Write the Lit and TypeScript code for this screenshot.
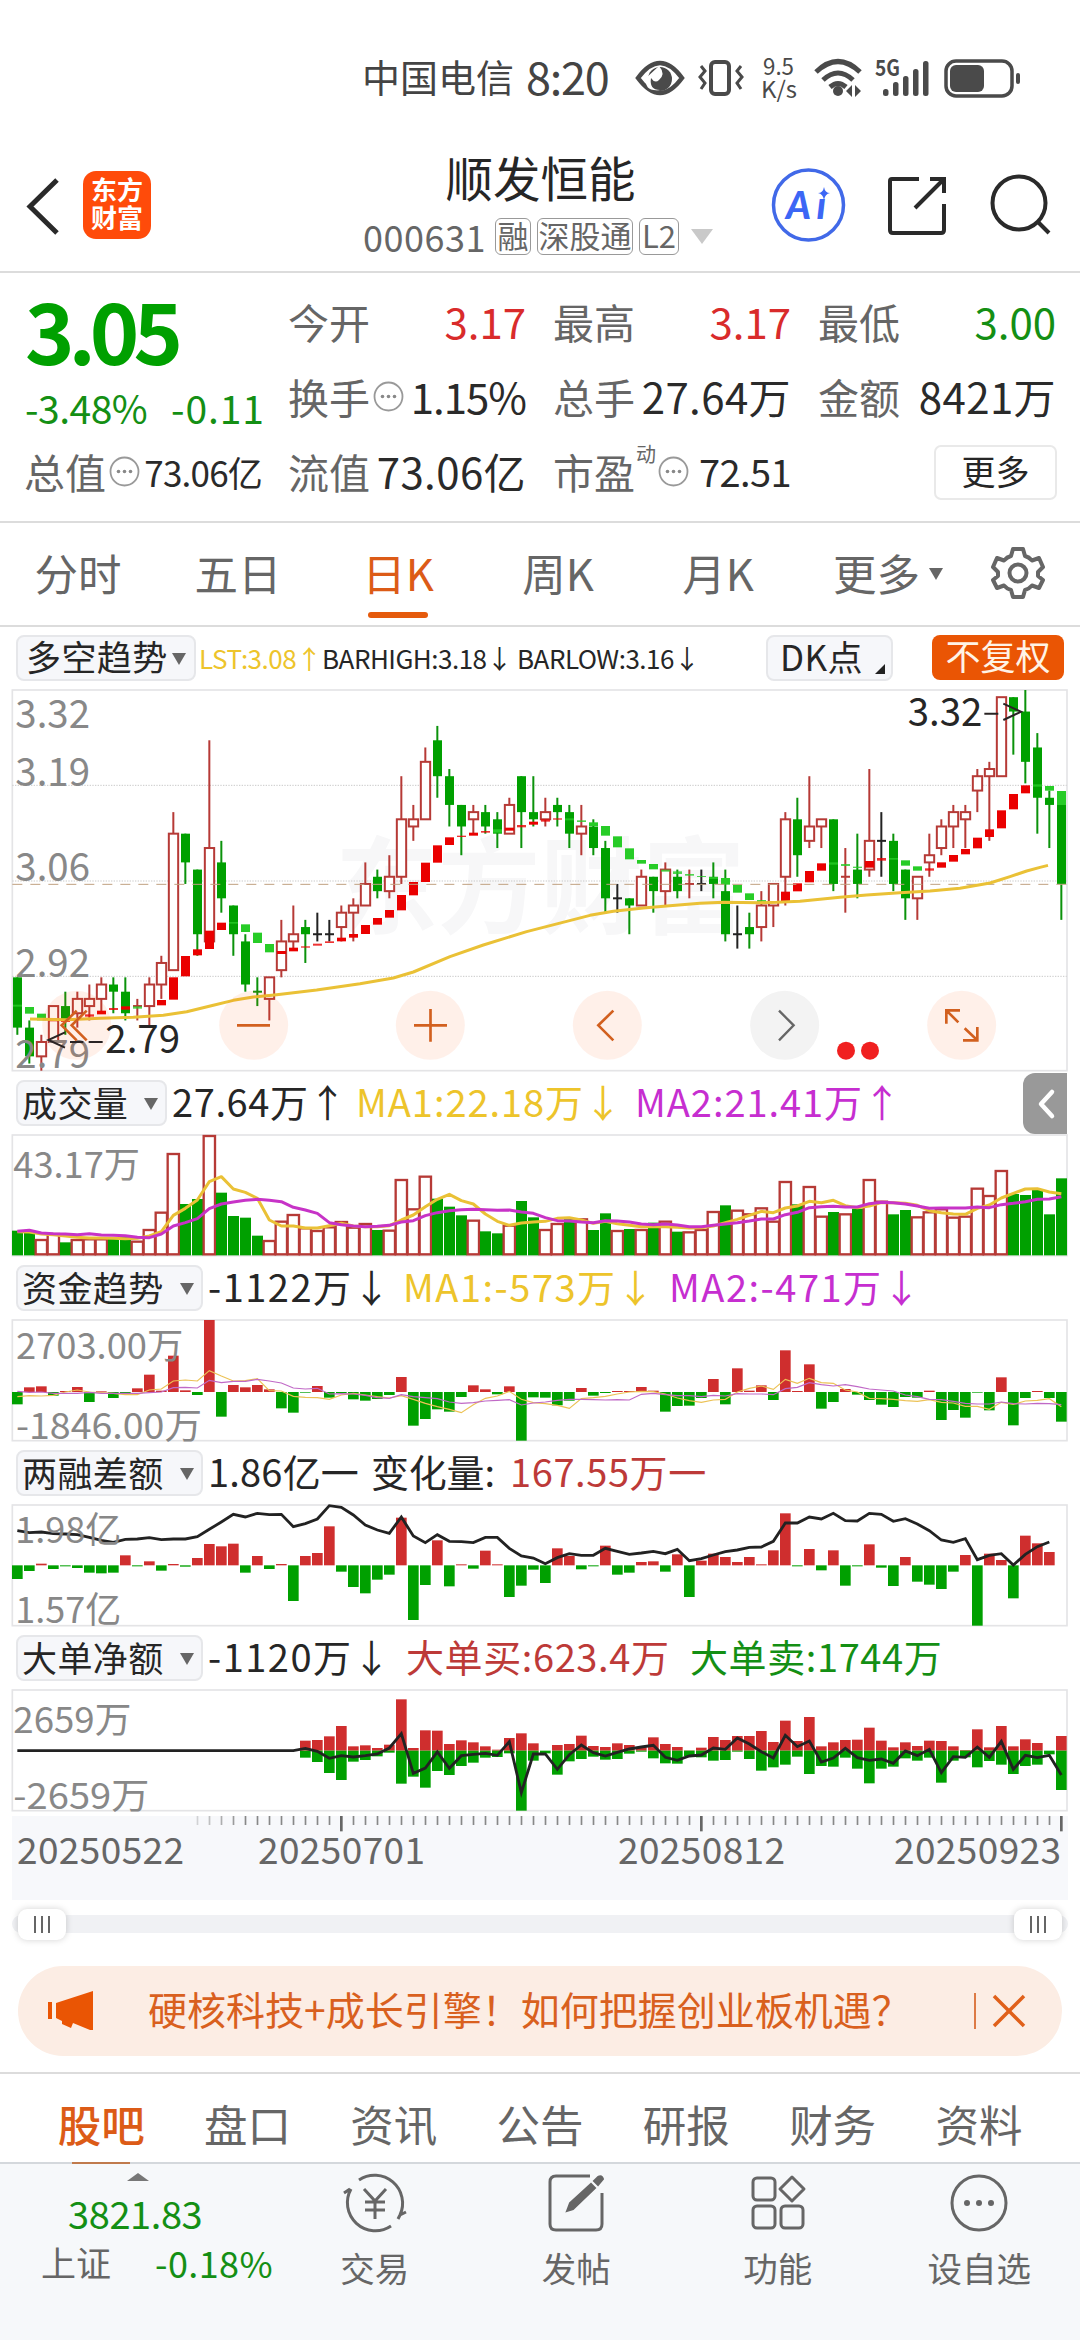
import { LitElement, html, svg, css } from "lit";
import { customElement, property } from "lit/decorators.js";

/* Chart geometry: three drawing units per CSS pixel. */
const X0 = 52;
const STEP = 36;
const cx = (i: number) => X0 + STEP * i;
const priceY = (cents: number) => 30 + (332 - cents) * 21.55;

/* Daily bars: kind, open/close top, open/close bottom, high, low (price in cents). */
const CANDLES =
  "g292,285,292,284 g285,281,286,280 r283,281,284,279 r288,283,288,283 g288,286,290,284 r289,287,290,285 r289,288,291,286 r291,289,292,287 g291,290,292,287 g290,287,292,286 r288,288,289,286 r291,288,292,285 r294,291,295,289 r312,293,315,293 g312,308,312,305 g307,298,307,295 r310,297,325,296 g308,303,311,301 g302,298,302,295 g297,291,298,290 g290,290,292,288 r292,289,292,286 r297,293,300,292 r298,297,302,296 g299,298,300,294 k298,298,301,297 k298,298,300,297 r301,299,302,297 r302,301,303,297 r305,302,308,302 g306,304,307,303 r306,304,309,303 r314,306,320,305 r314,313,316,311 r322,314,324,314 g325,320,327,317 g320,316,321,313 g316,313,316,309 r315,314,316,312 g315,313,316,312 g314,312,315,310 r316,312,317,312 g320,315,320,310 g315,314,320,313 r315,314,317,313 g316,315,317,313 g315,312,316,310 r313,312,316,309 g313,310,314,309 g310,303,311,301 k303,303,305,301 g303,302,303,298 r306,302,307,302 g306,304,306,301 r307,304,308,302 g306,304,307,303 r305,305,307,303 k305,305,307,304 g306,305,308,303 g304,298,307,297 k298,298,302,296 g299,298,301,296 r302,299,304,297 r305,302,305,299 r314,306,315,302 g314,309,317,306 r313,311,320,310 r314,313,314,310 g314,305,314,304 r306,306,310,301 g307,305,312,303 r311,307,321,306 k311,311,315,306 g311,305,312,304 g307,303,307,300 r306,303,306,300 r309,308,312,306 r313,310,314,309 r315,313,316,310 r315,314,316,310 r320,318,321,315 r321,320,322,311 r331,320,331,320 g331,329,331,323 g329,322,332,319 g324,317,326,312 g317,316,318,310 g317,305,317,300"
    .split(" ")
    .map((s) => ({ kind: s[0], v: s.slice(1).split(",").map(Number) }));

/* Trend blocks: kind+index, top, bottom. */
const TREND =
  "g0,974,980 g1,981,1001 g2,1001,1021 r3,1019,1024 r4,1020,1026 r6,1003,1010 r7,992,1003 r8,984,990 r9,979,989 g10,979,986 r12,960,976 r13,892,959 r14,828,889 r15,808,826 r16,752,807 r17,728,750 g18,726,731 g19,733,756 g20,758,789 g21,792,817 r22,813,822 r23,803,814 r24,799,803 r25,791,797 r26,784,789 r27,773,784 r28,762,773 r29,735,762 r30,714,734 r31,690,713 r32,645,691 r33,606,646 r34,548,606 r35,496,548 r36,472,495 r37,467,471 r38,458,467 r39,453,458 g40,448,458 r41,443,452 r42,435,442 r43,425,434 r44,418,425 r45,415,419 g46,415,421 g47,421,426 g48,427,438 g49,438,467 g50,469,502 g51,505,538 g52,540,551 g53,552,568 g54,569,575 g55,574,582 g56,582,587 g57,588,591 g58,591,597 g59,594,614 g60,615,638 g61,640,660 g62,660,666 r64,635,664 r65,610,634 r66,573,607 r67,550,572 g68,547,554 g69,552,558 g70,560,564 r71,543,563 r72,534,542 g73,534,539 g74,541,557 g75,559,572 r76,565,572 r77,547,563 r78,525,545 r79,507,523 r80,473,505 r81,448,471 r82,391,445 r83,342,388 r84,316,340 g85,313,320 g86,318,332 g87,333,375"
    .split(" ")
    .map((s) => ({ kind: s[0], v: s.slice(1).split(",").map(Number) }));

const TREND_LINE =
  "90,1017 200,1019 300,1015 400,1012 490,1006 560,995 640,976 700,961 760,951 830,944 950,930 1080,911 1180,894 1240,876 1350,830 1450,795 1580,755 1700,724 1770,706 1840,694 1930,684 2000,678 2100,670 2170,667 2280,668 2330,667 2400,664 2520,652 2600,645 2700,638 2790,633 2880,625 2970,609 3030,590 3080,573 3120,562 3144,556";

const nums = (s: string, off: number) => s.split(" ").map((n) => Number(n) - off);

const VOLUME =
  "g482 g487 r510 r492 g517 r510 r508 r508 g505 g495 r515 r480 r428 r252 g402 g387 r198 g368 g438 g443 g497 r513 r455 r435 r475 r483 r472 r456 r473 r462 g480 r482 r330 r418 r320 g386 g410 g436 r452 g484 g490 r467 g393 g442 r480 r462 g445 r448 g480 g430 r483 g477 r480 g458 r455 g485 r487 r480 r426 g406 r422 r433 r415 r455 r336 g403 r351 r440 g426 r433 g416 r330 r395 g433 g420 r442 r427 r418 r443 r440 r356 r378 r303 g372 g375 g360 g433 g325"
    .split(" ")
    .map((s) => ({ kind: s[0], y: Number(s.slice(1)) - 195 }));
const VOL_MA1 = nums("485 486 492 494 498 502 504 504 505 506 505 498 485 436 415 390 335 320 357 367 385 450 468 468 474 474 467 460 468 470 470 467 450 435 410 388 373 392 402 432 454 466 459 456 454 445 443 450 460 454 461 466 470 470 470 472 474 473 468 458 448 436 424 428 414 408 394 398 391 407 413 408 398 398 400 406 422 428 432 433 415 405 384 370 357 356 366 371", 195);
const VOL_MA2 = nums("484 481 489 491 492 494 491 495 496 497 502 503 492 468 458 446 416 402 396 391 388 391 395 412 420 430 458 464 468 470 469 466 456 452 437 428 422 419 418 419 421 420 426 430 443 452 453 456 458 452 453 456 462 464 462 465 470 470 466 462 458 453 447 447 434 427 413 410 409 411 411 401 397 398 402 408 415 414 414 414 411 413 404 400 395 388 387 380", 195);

const FUND = nums("1003 952 949 977 963 951 996 965 984 972 955 914 962 857 961 975 750 1040 945 952 945 958 1015 1028 966 948 983 969 988 992 987 975 921 1067 1047 1018 1025 981 946 958 973 949 1112 982 983 1006 992 954 977 969 963 963 951 962 1025 1008 1007 984 927 1003 895 962 946 990 841 963 883 1016 996 957 974 990 1004 1011 981 983 962 1050 1020 1043 968 1021 922 1066 984 963 984 1055", 750);
const FUND_MA1 = nums("980 977 978 976 966 960 966 968 970 974 974 960 957 933 930 933 902 918 933 932 926 962 963 979 982 983 988 975 970 975 980 984 977 988 1000 1010 1018 1028 1004 985 978 964 988 998 1001 1006 1015 986 983 979 972 966 964 965 972 984 992 997 990 988 966 955 948 958 928 940 925 938 940 960 966 985 986 988 992 994 989 997 999 1009 1009 1018 997 1003 993 991 986 1010", 750);
const FUND_MA2 = nums("964 967 966 970 970 970 967 970 970 970 970 968 966 953 952 954 931 938 934 934 928 933 939 954 957 955 972 971 972 976 983 985 974 980 983 986 996 1000 998 993 991 989 1005 999 996 991 988 988 989 990 989 990 973 970 974 977 977 980 976 978 971 972 972 974 956 952 938 944 948 944 950 957 960 963 975 980 988 989 994 1000 1002 1002 996 1001 1002 1000 1001 1004", 750);

const MARGIN = nums("417 393 371 387 379 384 398 400 398 346 379 364 392 372 380 354 312 319 311 398 348 387 372 483 348 339 259 395 441 460 419 404 233 540 435 301 439 373 386 332 373 471 437 389 429 325 348 388 379 317 404 398 366 364 395 343 471 362 341 351 366 351 373 331 220 379 327 391 331 437 379 313 383 438 351 425 434 447 395 345 557 341 360 475 287 310 336", 195);
const MARGIN_LINE = nums("272 278 276 281 282 284 292 301 307 298 297 293 299 297 297 290 268 246 223 231 220 224 223 260 251 237 197 202 225 255 270 280 231 288 308 284 304 305 308 292 292 325 348 354 371 353 341 346 346 325 334 343 339 334 341 328 362 356 345 335 330 322 321 304 249 249 231 237 220 242 243 220 223 244 236 252 272 300 307 296 359 346 341 375 343 320 306", 195);

const BLOCK_BUY = nums("902 900 889 858 919 916 924 914 778 924 871 872 912 901 907 919 929 894 880 910 932 915 912 887 918 921 910 915 922 892 912 921 931 923 891 900 888 888 873 906 842 903 831 919 907 900 899 863 902 922 907 918 902 903 919 930 868 922 858 919 898 909 932 888", 750);
const BLOCK_SELL = nums("953 966 999 1020 965 960 949 938 1031 1010 1043 993 1005 978 968 953 951 940 1112 962 940 1004 964 957 950 959 957 941 935 955 970 971 948 952 962 960 935 957 992 982 974 950 1002 978 980 953 986 1030 986 980 955 962 953 1028 962 952 982 963 974 1002 978 974 943 1050", 750);
const BLOCK_LINE = [
  ...Array(24).fill(182),
  ...nums("925 934 955 947 951 947 942 924 881 1000 984 936 985 947 943 940 946 905 1058 942 942 988 944 915 938 948 937 927 921 916 952 961 948 945 924 928 894 912 935 954 886 920 903 966 954 925 953 961 957 970 933 947 928 998 950 952 921 952 904 988 946 953 946 1005", 750),
];

const line = (v: number[], cls: string) =>
  svg`<polyline class=${cls} points=${v.map((y, i) => `${cx(i)},${y}`).join(" ")} />`;
const label = (t: string, x: number, y: number, w: number, cls = "lab") =>
  svg`<text class=${cls} x=${x} y=${y} textLength=${w} lengthAdjust="spacingAndGlyphs">${t}</text>`;
const signed = (v: number[], base: number) =>
  v.map((y, i) => {
    const up = y < base;
    const h = Math.max(2, Math.abs(y - base));
    return svg`<rect class=${up ? "up" : "down"} x=${cx(i) - 16} y=${up ? base - h : base} width="32" height=${h} />`;
  });

const chartCss = css`
  :host { display: block; }
  svg { display: block; }
  text { font-family: "Noto Sans CJK SC", sans-serif; }
  .frame { fill: none; stroke: #e4e4e6; stroke-width: 5; }
  .grid { stroke: #c9c9c9; stroke-width: 3; stroke-dasharray: 4 4; }
  .last { stroke: #c0a080; stroke-width: 3; stroke-dasharray: 30 24; }
  .lab { font-size: 108px; fill: #888; }
  .axis { font-size: 118px; fill: #888; }
  .note { font-size: 118px; fill: #262626; }
  .water { font-size: 315px; font-weight: 700; fill: #f7f7f8; }
  .hollow { fill: #fff; stroke: #b63a36; stroke-width: 6; }
  .vol { stroke-width: 7; }
  .up { fill: #cf2e2e; }
  .down { fill: #00a000; }
  .wr { fill: #b63a36; }
  .wg { fill: #0b920b; }
  .wk { fill: #222; }
  .tr { fill: #ea0000; }
  .tg { fill: #27cc27; }
  .thin { opacity: 0.8; }
  .yl { fill: none; stroke: #eac136; stroke-width: 9; stroke-linejoin: round; }
  .ml { fill: none; stroke: #c733c7; stroke-width: 9; stroke-linejoin: round; }
  .yt { fill: none; stroke: #ecc255; stroke-width: 3.5; }
  .mt { fill: none; stroke: #c069c6; stroke-width: 3.5; }
  .bl { fill: none; stroke: #222; stroke-width: 8.5; }
  .arrow { fill: none; stroke: #2a2424; stroke-width: 6; }
  .ctl { fill: #ff5000; fill-opacity: 0.085; }
  .ctl-off { fill: #f3f3f3; }
  .ico { fill: none; stroke: #d2601f; stroke-width: 8; }
  .ico-off { fill: none; stroke: #666; stroke-width: 7; }
  .dot { fill: #f02020; }
`;

@customElement("price-chart")
class PriceChart extends LitElement {
  static styles = chartCss;

  candle(kind: string, v: number[], i: number) {
    const [t, b, h, l] = v.map(priceY);
    const c = cx(i);
    const wick = svg`<rect class=${"w" + kind} x=${c - 3} y=${h} width="6" height=${l - h} />`;
    if (t === b) return svg`${wick}<rect class=${"w" + kind} x=${c - 13} y=${t - 3} width="27" height="6" />`;
    if (kind === "r")
      return svg`${wick}<rect class="hollow" x=${c - 13.5} y=${t} width="28" height=${b - t} />`;
    return svg`${wick}<rect class="down" x=${c - 13} y=${t} width="27" height=${b - t} />`;
  }

  render() {
    const pts = [77 * 3 - 1, 761, 1291, 1822, 2354, 2885];
    return html`<svg width="1062" height="384" viewBox="30 24 3186 1152">
      ${label("东方财富", 1006, 735, 1230, "water")}
      <rect class="frame" x="37" y="30" width="3164" height="1142" />
      <path class="grid" d="M37 316H3200M37 603H3200M37 889H3200" />
      ${label("3.32", 46, 144, 224, "axis")}${label("3.19", 46, 318, 224, "axis")}
      ${label("3.06", 46, 603, 224, "axis")}${label("2.92", 46, 890, 224, "axis")}
      ${CANDLES.map((c, i) => this.candle(c.kind, c.v, i))}
      ${TREND.map(({ kind, v: [i, a, b] }) => svg`<rect class=${"t" + kind + (b - a < 9 ? " thin" : "")} x=${cx(i) - 13} y=${a} width="27" height=${b - a} />`)}
      <path class="last" d="M37 613H3200" />
      <polyline class="yl" points=${TREND_LINE} />
      ${label("2.79", 46, 1164, 224, "axis")}
      ${pts.map((x, i) => svg`<circle class=${i === 4 ? "ctl-off" : "ctl"} cx=${x} cy="1036" r="103.5" />`)}
      <path class="ico" d="M230 992L185 1036L230 1081M260 992L215 1036L260 1081M711 1036H810M1242 1036H1341M1291.500 987V1085M1840 992L1795 1036L1840 1081M2839 1031V991H2880M2839 991L2875 1027M2932 1041V1081H2889M2932 1081L2894 1045" />
      <path class="ico-off" d="M2337 992L2381 1036L2337 1081" />
      <path class="arrow" d="M195 1057L145 1080L195 1103M210 1086H250M266 1086H308M2953 101H2995M3010 71L3063 95L3010 120" />
      ${label("2.79", 316, 1120, 224, "note")}${label("3.32", 2723, 137, 224, "note")}
      <circle class="dot" cx="2538" cy="1112" r="27" /><circle class="dot" cx="2610" cy="1112" r="27" />
    </svg>`;
  }
}

@customElement("sub-chart")
class SubChart extends LitElement {
  static styles = chartCss;
  @property() kind = "volume";

  body() {
    if (this.kind === "volume")
      return svg`${VOLUME.map((b, i) =>
        b.kind === "r"
          ? svg`<rect class="hollow vol" x=${cx(i) - 17} y=${b.y} width="34" height=${358 - b.y} />`
          : svg`<rect class="down" x=${cx(i) - 16} y=${b.y} width="33" height=${361 - b.y} />`)}
        ${line(VOL_MA1, "yl")}${line(VOL_MA2, "ml")}${label("43.17万", 40, 128, 380)}`;
    if (this.kind === "fund")
      return svg`${signed(FUND, 216)}${line(FUND_MA1, "yt")}${line(FUND_MA2, "mt")}
        ${label("2703.00万", 48, 116, 502)}${label("-1846.00万", 48, 357, 558)}`;
    if (this.kind === "margin")
      return svg`${signed(MARGIN, 181)}${line(MARGIN_LINE, "bl")}
        ${label("1.98亿", 46, 115, 318)}${label("1.57亿", 46, 355, 318)}`;
    return svg`${BLOCK_BUY.map((y, i) => svg`<rect class="up" x=${cx(i + 24) - 16} y=${y} width="32" height=${182 - y} /><rect class="down" x=${cx(i + 24) - 16} y="182" width="32" height=${BLOCK_SELL[i] - 182} />`)}
      ${line(BLOCK_LINE, "bl")}${label("2659万", 40, 128, 354)}${label("-2659万", 40, 358, 408)}`;
  }

  render() {
    return html`<svg width="1062" height="123" viewBox="30 -3 3186 369">
      <rect class="frame" x="37" y="0" width="3164" height="362" />${this.body()}
    </svg>`;
  }
}

@customElement("app-root")
class AppRoot extends LitElement {
  static styles = css`
    :host { display: block; width: 1080px; height: 2340px; overflow: hidden; background: #fff; color: #262626;
      font-family: "Noto Sans CJK SC", sans-serif; line-height: 1; }
    * { box-sizing: border-box; }
    svg { display: block; flex: none; }
    span { white-space: nowrap; }
    .row { display: flex; align-items: center; }
    .status { height: 151px; padding-left: 362px; color: #444; }
    .carrier { font-size: 38px; width: 164px; }
    .clock { font-size: 45px; width: 106px; letter-spacing: -1.2px; }
    .st-icons { margin-top: 5px; }
    .head { display: grid; grid-template-columns: 72px 68px 162px 420px 1fr; height: 122px; border-bottom: 2px solid #dcdcdc; align-items: start; }
    .back { padding: 26px 0 0 16px; }
    .logo { margin: 20px 0 0 11px; width: 68px; height: 68px; border-radius: 13px; background: #ff4b0a; color: #fff; font-size: 26px; font-weight: 700; line-height: 28px; text-align: center; padding-top: 4px; }
    .title { font-size: 47.5px; text-align: center; line-height: 52px; }
    .mid { width: 420px; }
    .mid .title { width: 477px; }
    .code { height: 50px; padding-left: 61px; color: #666; margin-top: 8px; }
    .code .num { font-size: 36px; width: 132px; letter-spacing: 0.5px; }
    .tag { border: 1.5px solid #999; border-radius: 6px; height: 37px; line-height: 31px; font-size: 31px; text-align: center; margin-right: 6px; }
    .t1 { width: 36px; } .t3 { width: 96px; } .t2 { width: 40px; }
    .tri { width: 0; height: 0; border: 11px solid transparent; border-top: 15px solid #c9c9c9; border-bottom: 0; margin-left: 6px; }
    .acts { display: flex; padding-top: 14px; padding-left: 48px; }

    .quote { display: grid; grid-template-columns: 264px 265px 265px 238px; padding-left: 24px; height: 250px; border-bottom: 2px solid #dcdcdc; align-content: start; padding-top: 12px; }
    .cell { height: 75px; display: flex; align-items: center; width: 238px; font-size: 41px; color: #666; padding-bottom: 3px; }
    .cell b { font-weight: 400; font-size: 42px; margin-left: auto; color: #2a2a2a; }
    .cell .cjk { letter-spacing: 0.4px; }
    .cell .pct { letter-spacing: -1px; }
    .cell .sm { font-size: 35px; letter-spacing: -0.8px; }
    .cell .pe { font-size: 38px; letter-spacing: -0.6px; }
    .cell .red { color: #d92b2b; } .cell .green { color: #148f14; }
    .big { grid-row: span 2; padding-left: 1px; }
    .price { font-size: 84px; font-weight: 700; color: #00a000; letter-spacing: -6px; line-height: 96px; margin-top: -4px; }
    .chg { display: flex; font-size: 39px; color: #148f14; line-height: 46px; letter-spacing: -0.5px; margin-top: 7px; }
    .chg span:first-child { width: 146px; }
    .chg span:last-child { letter-spacing: 0.9px; }
    .dyn { font-size: 20px; align-self: flex-start; margin-top: 9px; width: 22px; text-align: center; }
    .info { margin-left: 3px; }
    .dyn + .info { margin-left: 1px; }
    .more { width: 123px; height: 55px; margin-left: auto; border: 2px solid #e9e9e9; border-radius: 7px; font-size: 34px; color: #262626; text-align: center; line-height: 47px; margin-bottom: -3px; }
    .cell:last-child { width: 239px; }

    .tabs { display: grid; grid-template-columns: 160px 160px 160px 160px 160px 168px 72px; height: 104px; border-bottom: 2px solid #dcdcdc; font-size: 43.5px; color: #666; }
    .tab { display: flex; flex-direction: column; align-items: center; padding: 27px 4px 0 0; line-height: 46px; height: 102px; }
    .tab.on { color: #dc5b17; }
    .tab.on::after { content: ""; width: 60px; height: 6px; border-radius: 3px; background: #e55a0c; margin-top: 16px; }
    .tab .tri { border-width: 12px 7px 0; border-top-color: #666; margin-left: 9px; }
    .tab.more-tab { flex-direction: row; align-items: flex-start; padding-left: 33px; }
    .more-tab .tri { margin-top: 18px; }
    .gear { padding: 22px 0 0 23px; }

    .ind { height: 61px; padding-left: 16px; font-size: 26px; }
    .chip { display: flex; align-items: center; height: 46px; border: 2px solid #e6e7ea; border-radius: 8px; background: #f6f7fa; font-size: 35px; padding: 0 7px 4px 4px; flex: none; letter-spacing: 0.4px; }
    .chip .tri { border-width: 12px 7px 0; border-top-color: #666; margin-left: auto; margin-top: 6px; }
    .c-main { width: 180px; padding-left: 8px; }
    .c-main .tri { margin-left: 4px; }
    .c3 { width: 151px; } .c4 { width: 187px; }
    .c-dk { width: 127px; padding-left: 12px; margin-left: auto; }
    .corner { width: 0; height: 0; border-left: 10px solid transparent; border-bottom: 10px solid #222; margin: 26px -1px 0 auto; }
    .adj { width: 132px; height: 45px; margin: 0 16px 0 39px; border-radius: 8px; background: #ea5504; color: #fff3e6; font-size: 35px; line-height: 40px; text-align: center; }
    .lst { width: 123px; margin-left: 3px; } .bh { width: 195px; } .bl { width: 190px; }
    .y { color: #edc42b; } .m { color: #c62ed0; } .r { color: #bd3a38; } .g { color: #148f14; }
    .lst, .bh, .bl { letter-spacing: -0.5px; }
    .stack { padding-left: 10px; }
    .srow { display: flex; align-items: center; height: 62px; padding-left: 6px; font-size: 38px; position: relative; }
    .srow > span { padding-bottom: 4px; letter-spacing: 0.6px; }
    .srow > .ma { letter-spacing: 0.95px; }
    .srow > .neg { letter-spacing: 1.5px; }
    .srow > .d1 { letter-spacing: 0.2px; }
    .srow > .d2 { letter-spacing: -0.2px; }
    .v1 { width: 184px; margin-left: 5px; } .v2 { width: 279px; }
    .f1 { width: 195px; margin-left: 5px; } .f2 { width: 266px; }
    .d1 { width: 163px; margin-left: 5px; } .d2 { width: 139px; }
    .b1 { width: 198px; margin-left: 5px; } .b2 { width: 284px; }
    .fold { position: absolute; left: 1013px; top: 1px; width: 44px; height: 61px; background: #999; border-radius: 12px 0 0 12px; padding: 15px 0 0 14px; }

    .axis { margin: 4px 12px 0; height: 84px; background: #f7f8fb; }
    .dates { display: grid; grid-template-columns: 241px 360px 276px 1fr; padding-left: 5px; font-size: 37px; color: #666; line-height: 37px; letter-spacing: 0.4px; margin-top: -2px; }
    .slider { display: flex; align-items: center; justify-content: space-between; margin: 15px 12px 0; height: 18px; border-radius: 9px; background: #f0f1f4; padding: 0 6px; }
    .knob { display: flex; gap: 5px; align-items: center; justify-content: center; width: 48px; height: 31px; border-radius: 9px; background: #fff; box-shadow: 0 0 7px rgba(0,0,0,.18); }
    .knob i { width: 2px; height: 17px; background: #666; }
    .banner { display: flex; align-items: center; margin: 33px 18px 0; height: 90px; border-radius: 45px; background: #fcede4; color: #d9601e; font-size: 39px; padding-left: 29px; }
    .banner span { margin-left: 53px; width: 802px; padding-bottom: 6px; }
    .banner .bar { width: 1.5px; height: 36px; background: #dd7a45; margin-left: 24px; }
    .banner .x { margin-left: 16px; }

    .btabs { display: grid; grid-template-columns: repeat(7, 146.3px); margin-top: 16px; padding-left: 28px; height: 92px; border-top: 2px solid #dcdcdc; border-bottom: 2px solid #d4d8dc; font-size: 43.5px; color: #666; }
    .bt { display: flex; flex-direction: column; align-items: center; line-height: 50px; padding-top: 25px; }
    .bt.on { color: #dc5b17; font-weight: 500; }
    .bt.on::after { content: ""; width: 58px; height: 2px; background: #c07a4c; margin-top: 13px; }
    .nav { display: grid; grid-template-columns: 274px repeat(4, 201.5px); height: 176px; background: #f6f8fa; color: #666; }
    .idx { padding: 9px 0 0 41px; }
    .idx .up { width: 0; height: 0; border: 11px solid transparent; border-bottom: 8px solid #777; border-top: 0; margin-left: 86px; }
    .idx .pt { font-size: 38px; color: #148f14; line-height: 52px; padding-left: 27px; letter-spacing: -0.4px; padding-top: 6px; }
    .idx .ln { display: flex; font-size: 35px; line-height: 46px; }
    .idx .ln b { font-weight: 400; color: #148f14; margin-left: 44px; font-size: 36px; letter-spacing: 0.4px; }
    .item { display: flex; flex-direction: column; align-items: center; padding-top: 8px; font-size: 34.5px; gap: 16px; }
    .yen { font: 36px "Noto Sans CJK SC", sans-serif; }
    .ai { font: italic 900 38px "Lato", sans-serif; }
    .tiny { font: 700 22px "Noto Sans CJK SC", sans-serif; }
    .rate { font: 23px "Noto Sans CJK SC", sans-serif; }
  `;

  info() {
    return html`<svg class="info" width="31" height="31" viewBox="0 0 31 31"><circle cx="15.500" cy="15.500" r="14" fill="none" stroke="#999" stroke-width="1.800"/><g fill="#888"><circle cx="9.500" cy="15.500" r="1.800"/><circle cx="15.500" cy="15.500" r="1.800"/><circle cx="21.500" cy="15.500" r="1.800"/></g></svg>`;
  }

  render() {
    return html`
      <div class="status row">
        <span class="carrier">中国电信</span><span class="clock">8:20</span>
        <svg class="st-icons" width="400" height="56" viewBox="632 50 400 56">
          <g fill="none" stroke="#4a4a4a">
            <path d="M638 78Q660 48 682 78Q660 108 638 78Z" stroke-width="4.500"/>
            <rect x="711" y="62" width="18" height="32" rx="4" stroke-width="4"/>
            <path d="M701 66l4 5-5 6 5 6-4 6M741 66l-4 5 5 6-5 6 4 6" stroke-width="3"/>
            <path d="M816 72Q838 51 860 72M823 80Q838 66 853 80M830 87Q838 80 846 87" stroke-width="5"/>
            <rect x="946" y="61" width="66" height="35" rx="10" stroke-width="3.500"/>
          </g>
          <g fill="#4a4a4a">
            <circle cx="660" cy="79" r="12"/><path d="M659 66q7 8 0 14q-4 4-8-2q-2 12 9 12q-16 2-14-12z" fill="#fff"/>
            <circle cx="838" cy="91" r="5"/><path d="M846 91l6-6v12zM861 91l-6-6v12z"/>
            <rect x="883" y="89" width="5.500" height="7" rx="2.500"/><rect x="893" y="82" width="5.500" height="14" rx="2.500"/><rect x="903" y="76" width="5.500" height="20" rx="2.500"/><rect x="913" y="69" width="5.500" height="27" rx="2.500"/><rect x="923" y="61" width="5.500" height="35" rx="2.500"/>
            <rect x="950" y="65" width="34" height="27" rx="6"/><rect x="1016" y="73" width="4" height="11" rx="2"/>
            <text class="rate" x="763" y="75" textLength="31" lengthAdjust="spacingAndGlyphs">9.5</text>
            <text class="rate" x="761" y="98" textLength="36" lengthAdjust="spacingAndGlyphs">K/s</text>
            <text class="tiny" x="875" y="76" textLength="25" lengthAdjust="spacingAndGlyphs">5G</text>
          </g>
        </svg>
      </div>
      <div class="head">
        <div class="back"><svg width="46" height="58" viewBox="0 0 46 58"><path d="M41 3L14 29.500L41 56" fill="none" stroke="#2a2a2a" stroke-width="5"/></svg></div>
        <div class="logo">东方<br>财富</div>
        <div></div>
        <div class="mid">
          <div class="title">顺发恒能</div>
          <div class="code row"><span class="num">000631</span><span class="tag t1">融</span><span class="tag t3">深股通</span><span class="tag t2">L2</span><i class="tri"></i></div>
        </div>
        <div class="acts">
          <svg width="290" height="80" viewBox="770 165 290 80">
            <circle cx="808.500" cy="205" r="35" fill="none" stroke="#4169e8" stroke-width="3.500"/>
            <text class="ai" x="786" y="219" textLength="40" fill="#3c66f5">Aı</text>
            <path d="M824 187q1 6 6 6q-5 1-6 7q-1-6-6-7q5 0 6-6z" fill="#3c66f5"/>
            <g fill="none" stroke="#2a2a2a" stroke-width="4">
              <path d="M919 179H892q-2 0-2 2V230q0 3 3 3H941q3 0 3-3V204M930 179H944V193M944 179L915 208"/>
              <circle cx="1019" cy="203" r="26.500"/><path d="M1037 221L1049 233"/>
            </g>
          </svg>
        </div>
      </div>

      <div class="quote">
        <div class="big"><div class="price">3.05</div><div class="chg"><span>-3.48%</span><span>-0.11</span></div></div>
        <div class="cell">今开<b class="red">3.17</b></div>
        <div class="cell">最高<b class="red">3.17</b></div>
        <div class="cell">最低<b class="green">3.00</b></div>
        <div class="cell">换手${this.info()}<b class="pct">1.15%</b></div>
        <div class="cell">总手<b class="cjk">27.64万</b></div>
        <div class="cell">金额<b class="cjk">8421万</b></div>
        <div class="cell">总值${this.info()}<b class="sm">73.06亿</b></div>
        <div class="cell">流值<b class="cjk">73.06亿</b></div>
        <div class="cell">市盈<span class="dyn">动</span>${this.info()}<b class="pe">72.51</b></div>
        <div class="cell"><span class="more">更多</span></div>
      </div>

      <div class="tabs">
        <div class="tab">分时</div><div class="tab">五日</div><div class="tab on">日K</div><div class="tab">周K</div><div class="tab">月K</div>
        <div class="tab more-tab">更多<i class="tri"></i></div>
        <div class="gear"><svg width="54" height="56" viewBox="-27 -28 54 56"><g fill="none" stroke="#666" stroke-width="4" stroke-linejoin="round"><path d="M-5-24H5L7-17Q11-16 14-12.500L21-15L25-6L20-1V3L25 7L21 15L14 12.500Q11 16 7 17L5 24H-5L-7 17Q-11 16-14 12.500L-21 15L-25 7L-20 3V-1L-25-6L-21-15L-14-12.500Q-11-16-7-17Z"/><circle r="8.500"/></g></svg></div>
      </div>

      <div class="ind row">
        <div class="chip c-main">多空趋势<i class="tri"></i></div>
        <span class="lst y">LST:3.08↑</span><span class="bh">BARHIGH:3.18↓</span><span class="bl">BARLOW:3.16↓</span>
        <div class="chip c-dk">DK点<i class="corner"></i></div><div class="adj">不复权</div>
      </div>

      <div class="stack">
        <price-chart></price-chart>
        <div class="srow"><div class="chip c3">成交量<i class="tri"></i></div><span class="v1">27.64万↑</span><span class="ma v2 y">MA1:22.18万↓</span><span class="ma m">MA2:21.41万↑</span>
          <div class="fold"><svg width="20" height="32" viewBox="0 0 20 32"><path d="M15 4L4 16L15 28" fill="none" stroke="#fff" stroke-width="4.500" stroke-linecap="round" stroke-linejoin="round"/></svg></div></div>
        <sub-chart kind="volume"></sub-chart>
        <div class="srow"><div class="chip c4">资金趋势<i class="tri"></i></div><span class="neg f1">-1122万↓</span><span class="neg f2 y">MA1:-573万↓</span><span class="neg m">MA2:-471万↓</span></div>
        <sub-chart kind="fund"></sub-chart>
        <div class="srow"><div class="chip c4">两融差额<i class="tri"></i></div><span class="d1">1.86亿一</span><span class="d2">变化量:</span><span class="r">167.55万一</span></div>
        <sub-chart kind="margin"></sub-chart>
        <div class="srow"><div class="chip c4">大单净额<i class="tri"></i></div><span class="neg b1">-1120万↓</span><span class="b2 r">大单买:623.4万</span><span class="g">大单卖:1744万</span></div>
        <sub-chart kind="block"></sub-chart>
      </div>

      <div class="axis">
        <svg width="1056" height="16" viewBox="36 0 3168 48">
          ${Array.from({ length: 73 }, (_, k) => k + 15).map((i) => {
            const major = i % 30 === 27;
            return svg`<rect x=${cx(i) - (major ? 4 : 2)} y="0" width=${major ? 8 : 5} height=${major ? 46 : 27} fill=${major ? "#666" : "#888"} opacity=${i < 19 ? (i - 13) / 6 : 1} />`;
          })}
        </svg>
        <div class="dates"><span>20250522</span><span>20250701</span><span>20250812</span><span>20250923</span></div>
      </div>
      <div class="slider"><div class="knob"><i></i><i></i><i></i></div><div class="knob"><i></i><i></i><i></i></div></div>
      <div class="banner">
        <svg width="48" height="42" viewBox="0 0 48 42"><path d="M1 12H5V29H1zM9 13L46 1V40H43L26 33L24 38L15 34V31L9 28Z" fill="#ea5504"/></svg>
        <span>硬核科技+成长引擎！如何把握创业板机遇？</span><i class="bar"></i>
        <svg class="x" width="34" height="34" viewBox="0 0 34 34"><path d="M2 2L32 32M32 2L2 32" stroke="#e0601a" stroke-width="3.500"/></svg>
      </div>

      <div class="btabs">${["股吧", "盘口", "资讯", "公告", "研报", "财务", "资料"].map((t, i) => html`<div class="bt ${i ? "" : "on"}">${t}</div>`)}</div>
      <div class="nav">
        <div class="idx"><div class="up"></div><div class="pt">3821.83</div><div class="ln">上证<b>-0.18%</b></div></div>
        <div class="item"><svg width="66" height="62" viewBox="-33 -31 66 62"><g fill="none" stroke="#666" stroke-width="3"><path d="M-16-23A28 28 0 0 1 25 12M25 12L23 16M25 12L31 9M16 23A28 28 0 0 1-24-14M-31-10L-25-14"/><path d="M-11-14L0-2L11-14M0-2V16M-10-1H10M-10 7H10"/></g></svg>交易</div>
        <div class="item"><svg width="66" height="62" viewBox="-33 -31 66 62"><path d="M14-27H-20Q-26-27-26-21V21Q-26 27-20 27H20Q26 27 26 21V-10" fill="none" stroke="#666" stroke-width="3"/><path d="M-9 8L-6 0L15-19L19-15L-3 6ZM18-22L22-26Q26-28 27-24L22-18Z" fill="#666" stroke="#666" stroke-width="2"/></svg>发帖</div>
        <div class="item"><svg width="66" height="62" viewBox="-33 -31 66 62"><g fill="none" stroke="#666" stroke-width="3"><rect x="-25" y="-25" width="22" height="22" rx="4"/><rect x="-25" y="3" width="22" height="22" rx="4"/><rect x="3" y="3" width="22" height="22" rx="4"/><path d="M14-26L26-14L14-2L2-14Z" stroke-linejoin="round"/></g></svg>功能</div>
        <div class="item"><svg width="66" height="62" viewBox="-33 -31 66 62"><circle r="27" fill="none" stroke="#666" stroke-width="3"/><g fill="#666"><circle cx="-12" r="3"/><circle r="3"/><circle cx="12" r="3"/></g></svg>设自选</div>
      </div>
    `;
  }
}
